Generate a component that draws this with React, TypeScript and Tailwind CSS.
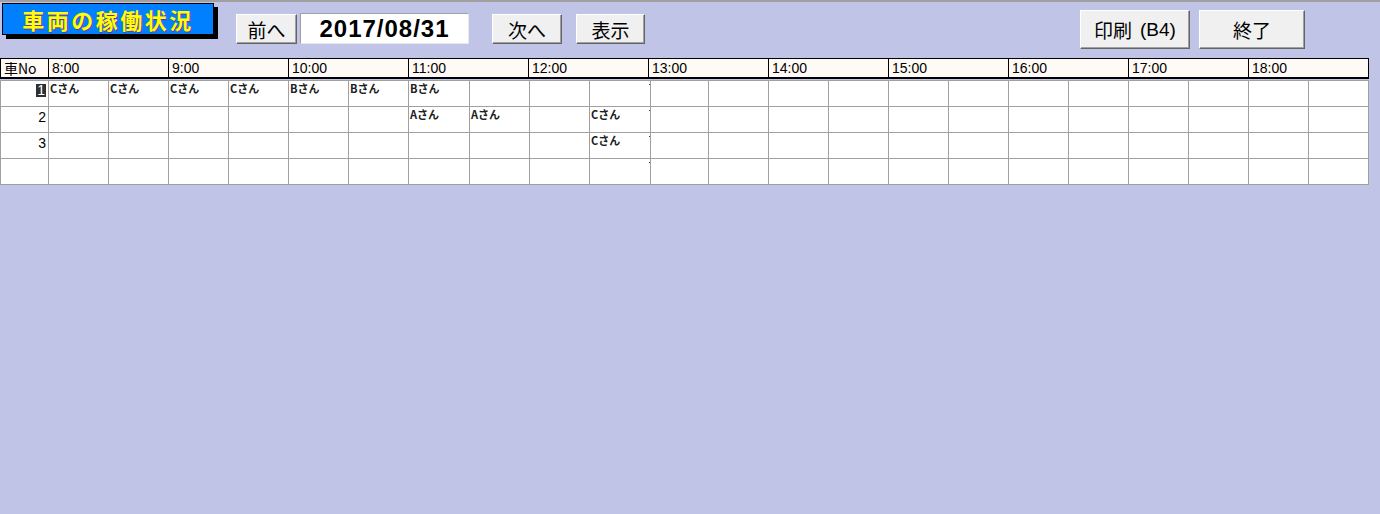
import React from 'react';

type Cell = { name?: string };

const hours = ['8:00', '9:00', '10:00', '11:00', '12:00', '13:00', '14:00', '15:00', '16:00', '17:00', '18:00'];

// widths of the 22 half-hour cells (grid lines are 1px gaps)
const slotCols =
  '47px 59px 59px 59px 59px 59px 59px 60px 59px 59px 60px 57px 59px 59px 59px 59px 59px 59px 59px 59px 59px 59px 59px';

const rows: { no: string; cells: Record<number, string> }[] = [
  { no: '1', cells: { 0: 'Cさん', 1: 'Cさん', 2: 'Cさん', 3: 'Cさん', 4: 'Bさん', 5: 'Bさん', 6: 'Bさん' } },
  { no: '2', cells: { 6: 'Aさん', 7: 'Aさん', 9: 'Cさん' } },
  { no: '3', cells: { 9: 'Cさん' } },
  { no: '', cells: {} },
];

const jp = "font-['Noto_Sans_CJK_JP',sans-serif]";

const Btn: React.FC<{ children: React.ReactNode; className?: string }> = ({ children, className }) => (
  <button
    className={`flex items-center justify-center bg-[#f0f0f0] border border-t-white border-l-white border-r-[#646464] border-b-[#646464] shadow-[inset_-1px_-1px_0_#a0a0a0] text-[19px] leading-none text-black ${jp} ${className ?? ''}`}
  >
    {children}
  </button>
);

export default function App() {
  return (
    <div className="w-full min-h-screen bg-[#c0c4e6]">
      <div className="h-[2px] bg-[#a0a0a0]" />

      {/* toolbar */}
      <div className="flex items-start h-[56px]">
        <div className="ml-[2px] mt-px w-[212px] h-[32px] bg-[#0080ff] border border-black shadow-[4px_4px_0_#000] flex items-center justify-center">
          <span
            className={`text-[22px] font-bold tracking-[2.5px] text-[#ffff00] leading-none [text-shadow:1px_1px_0_#7030a0] ${jp}`}
          >
            車両の稼働状況
          </span>
        </div>

        <Btn className="ml-[22px] mt-[12px] w-[61px] h-[30px]">前へ</Btn>

        <div className="ml-[3px] mt-[11px] w-[169px] h-[31px] bg-white border border-t-[#a0a0a0] border-l-[#a0a0a0] border-r-[#e8e8e8] border-b-[#e8e8e8] flex items-center justify-center">
          <span className="font-['Liberation_Sans',sans-serif] font-bold text-[24px] tracking-[1px] leading-none text-black">
            2017/08/31
          </span>
        </div>

        <Btn className="ml-[23px] mt-[12px] w-[70px] h-[30px]">次へ</Btn>
        <Btn className="ml-[14px] mt-[12px] w-[69px] h-[30px]">表示</Btn>

        <Btn className="ml-[435px] mt-[8px] w-[110px] h-[39px]">
          <span>印刷</span>
          <span className="ml-[8px] font-['Liberation_Sans',sans-serif]">(B4)</span>
        </Btn>
        <Btn className="ml-[9px] mt-[8px] w-[106px] h-[39px]">終了</Btn>
      </div>

      {/* time header */}
      <div
        className="grid w-[1369px] h-[21px] gap-px bg-black px-px pt-px pb-[2px]"
        style={{ gridTemplateColumns: '47px repeat(11, 119px)' }}
      >
        <div className={`bg-[#fffaf5] pl-[3px] text-[14px] leading-[18px] text-black ${jp}`}>車No</div>
        {hours.map((h) => (
          <div
            key={h}
            className="bg-[#fffaf5] pl-[3px] text-[14px] leading-[18px] text-black font-['Liberation_Sans',sans-serif]"
          >
            {h}
          </div>
        ))}
      </div>

      {/* slots */}
      <div
        className="mt-px grid w-[1369px] gap-px bg-[#a0a0a0] p-px"
        style={{ gridTemplateColumns: slotCols, gridAutoRows: '25px' }}
      >
        {rows.map((r, ri) => (
          <React.Fragment key={ri}>
            <div className="bg-white flex justify-end pr-[2px] pt-[2px] text-[14px] leading-[16px] text-black font-['Liberation_Sans',sans-serif]">
              {r.no === '1' ? (
                <span className="bg-[#303030] text-white px-px h-[13px] leading-[13px] mt-px">1</span>
              ) : (
                r.no
              )}
            </div>
            {Array.from({ length: 22 }).map((_, ci) => {
              const cell: Cell = { name: r.cells[ci] };
              return (
                <div key={ci} className="bg-white flex justify-between items-start">
                  <span className={`pl-px pt-px text-[11px] font-bold leading-[13px] text-[#202020] ${jp}`}>
                    {cell.name ?? ''}
                  </span>
                  {ci === 9 && <span className="mt-[3px] w-px h-px bg-[#404040]" />}
                </div>
              );
            })}
          </React.Fragment>
        ))}
      </div>
    </div>
  );
}
